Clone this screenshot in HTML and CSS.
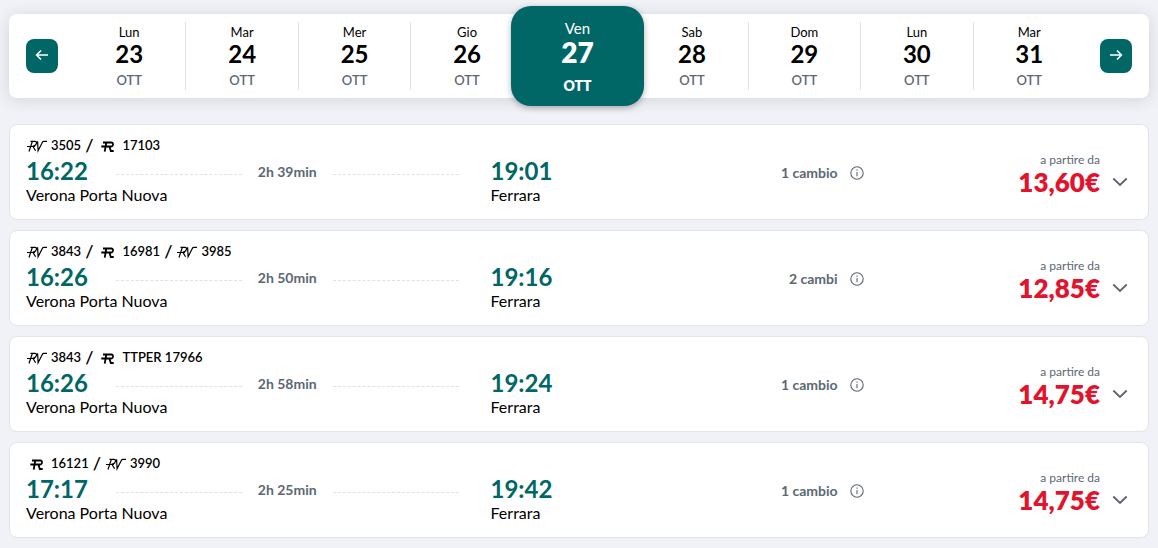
FILE: index.html
```html
<!DOCTYPE html>
<html lang="it">
<head>
  <meta charset="UTF-8">
  <meta name="viewport" content="width=device-width, initial-scale=1">
  <title>Verona Porta Nuova - Ferrara</title>
  <link rel="stylesheet" href="styles.css">
</head>
<body>
  <!-- Icone condivise -->
  <svg class="icon-defs" aria-hidden="true">
    <symbol id="icon-rv" viewBox="0 0 21 20">
      <path d="M1 11.500h8M4.500 6.300h4.500c2.500 0 1.700 4-1 4.600L6.500 11.300M6.300 6.500 3 16.500M7 11.500l2.600 4.300M11.600 6.300l.5 9.500L16.300 7.400q.5-1 1.500-1h3.200" fill="none" stroke="currentColor" stroke-width="1.200"/>
    </symbol>
    <symbol id="icon-r" viewBox="0 0 21 20">
      <path d="M6 7.500h8.200c2.700 0 2.200 4 -.3 4H4.300M9.300 7.500 7.700 16.600M12.400 11.500l1.400 4.500h2.900" fill="none" stroke="currentColor" stroke-width="1.800"/>
    </symbol>
    <symbol id="icon-info" viewBox="0 0 14 14">
      <circle cx="7" cy="7" r="6.2" fill="none" stroke="currentColor" stroke-width="1.1"/>
      <path d="M7 6v4.2M7 3.6v1.2" fill="none" stroke="currentColor" stroke-width="1.1"/>
    </symbol>
    <symbol id="icon-chevron" viewBox="0 0 16 10">
      <path d="M1.3 1.5 8 8l6.700-6.500" fill="none" stroke="currentColor" stroke-width="1.9"/>
    </symbol>
    <symbol id="icon-left" viewBox="0 0 14 12">
      <path d="M13 5H1.800M6 .5 1.500 5 6 9.500" fill="none" stroke="currentColor" stroke-width="1.500"/>
    </symbol>
    <symbol id="icon-right" viewBox="0 0 14 12">
      <path d="M1 5h11.200M8 .5 12.500 5 8 9.500" fill="none" stroke="currentColor" stroke-width="1.500"/>
    </symbol>
  </svg>

  <nav class="date-bar" aria-label="Scegli la data">
    <button class="arrow-button" aria-label="Giorni precedenti"><svg><use href="#icon-left"/></svg></button>
    <div class="days">
      <button class="day"><span class="weekday">Lun</span><span class="number">23</span><span class="month">OTT</span></button>
      <button class="day"><span class="weekday">Mar</span><span class="number">24</span><span class="month">OTT</span></button>
      <button class="day"><span class="weekday">Mer</span><span class="number">25</span><span class="month">OTT</span></button>
      <button class="day"><span class="weekday">Gio</span><span class="number">26</span><span class="month">OTT</span></button>
      <button class="day selected" aria-current="date"><span class="weekday">Ven</span><span class="number">27</span><span class="month">OTT</span></button>
      <button class="day"><span class="weekday">Sab</span><span class="number">28</span><span class="month">OTT</span></button>
      <button class="day"><span class="weekday">Dom</span><span class="number">29</span><span class="month">OTT</span></button>
      <button class="day"><span class="weekday">Lun</span><span class="number">30</span><span class="month">OTT</span></button>
      <button class="day"><span class="weekday">Mar</span><span class="number">31</span><span class="month">OTT</span></button>
    </div>
    <button class="arrow-button" aria-label="Giorni successivi"><svg><use href="#icon-right"/></svg></button>
  </nav>

  <main class="solutions">
    <article class="card">
      <div class="trains">
        <svg><use href="#icon-rv"/></svg><span>3505</span>
        <span class="slash">/</span>
        <svg><use href="#icon-r"/></svg><span>17103</span>
      </div>
      <div class="departure">
        <div class="route">
          <span class="time">16:22</span>
          <span class="line"></span><span class="duration">2h 39min</span><span class="line"></span>
        </div>
        <div class="station">Verona Porta Nuova</div>
      </div>
      <div class="arrival">
        <div class="time">19:01</div>
        <div class="station">Ferrara</div>
      </div>
      <div class="changes">1 cambio <button class="info-button" aria-label="Dettagli cambi"><svg><use href="#icon-info"/></svg></button></div>
      <div class="offer">
        <div class="price-box"><div class="from">a partire da</div><div class="price">13,60€</div></div>
        <button class="expand-button" aria-label="Mostra offerte"><svg><use href="#icon-chevron"/></svg></button>
      </div>
    </article>

    <article class="card">
      <div class="trains">
        <svg><use href="#icon-rv"/></svg><span>3843</span>
        <span class="slash">/</span>
        <svg><use href="#icon-r"/></svg><span>16981</span>
        <span class="slash">/</span>
        <svg><use href="#icon-rv"/></svg><span>3985</span>
      </div>
      <div class="departure">
        <div class="route">
          <span class="time">16:26</span>
          <span class="line"></span><span class="duration">2h 50min</span><span class="line"></span>
        </div>
        <div class="station">Verona Porta Nuova</div>
      </div>
      <div class="arrival">
        <div class="time">19:16</div>
        <div class="station">Ferrara</div>
      </div>
      <div class="changes">2 cambi <button class="info-button" aria-label="Dettagli cambi"><svg><use href="#icon-info"/></svg></button></div>
      <div class="offer">
        <div class="price-box"><div class="from">a partire da</div><div class="price">12,85€</div></div>
        <button class="expand-button" aria-label="Mostra offerte"><svg><use href="#icon-chevron"/></svg></button>
      </div>
    </article>

    <article class="card">
      <div class="trains">
        <svg><use href="#icon-rv"/></svg><span>3843</span>
        <span class="slash">/</span>
        <svg><use href="#icon-r"/></svg><span>TTPER 17966</span>
      </div>
      <div class="departure">
        <div class="route">
          <span class="time">16:26</span>
          <span class="line"></span><span class="duration">2h 58min</span><span class="line"></span>
        </div>
        <div class="station">Verona Porta Nuova</div>
      </div>
      <div class="arrival">
        <div class="time">19:24</div>
        <div class="station">Ferrara</div>
      </div>
      <div class="changes">1 cambio <button class="info-button" aria-label="Dettagli cambi"><svg><use href="#icon-info"/></svg></button></div>
      <div class="offer">
        <div class="price-box"><div class="from">a partire da</div><div class="price">14,75€</div></div>
        <button class="expand-button" aria-label="Mostra offerte"><svg><use href="#icon-chevron"/></svg></button>
      </div>
    </article>

    <article class="card">
      <div class="trains">
        <svg><use href="#icon-r"/></svg><span>16121</span>
        <span class="slash">/</span>
        <svg><use href="#icon-rv"/></svg><span>3990</span>
      </div>
      <div class="departure">
        <div class="route">
          <span class="time">17:17</span>
          <span class="line"></span><span class="duration">2h 25min</span><span class="line"></span>
        </div>
        <div class="station">Verona Porta Nuova</div>
      </div>
      <div class="arrival">
        <div class="time">19:42</div>
        <div class="station">Ferrara</div>
      </div>
      <div class="changes">1 cambio <button class="info-button" aria-label="Dettagli cambi"><svg><use href="#icon-info"/></svg></button></div>
      <div class="offer">
        <div class="price-box"><div class="from">a partire da</div><div class="price">14,75€</div></div>
        <button class="expand-button" aria-label="Mostra offerte"><svg><use href="#icon-chevron"/></svg></button>
      </div>
    </article>
  </main>
</body>
</html>
```
FILE: styles.css
```css
* {
  box-sizing: border-box;
}
body {
  margin: 0;
  padding: 14px 9px 8px;
  background-color: #f1f2f7;
  color: #000;
  font-family: Lato, "Liberation Sans", sans-serif;
  font-size: 16px;
}
button {
  padding: 0;
  border: none;
  background: none;
  color: inherit;
  font-family: inherit;
  cursor: pointer;
}
.icon-defs {
  display: none;
}

/* Barra delle date */
.date-bar {
  display: flex;
  align-items: center;
  gap: 15px;
  padding: 8px 17px;
  background-color: #fff;
  border-radius: 8px;
  box-shadow: 0 2px 16px rgba(40, 40, 70, 0.14);
}
.arrow-button {
  display: flex;
  align-items: center;
  justify-content: center;
  width: 32px;
  height: 34px;
  border-radius: 8px;
  background-color: #006666;
  color: #fff;
}
.arrow-button svg {
  width: 14px;
  height: 12px;
}
.days {
  flex: 1;
  display: grid;
  grid-template-columns: repeat(9, 1fr);
}
.day {
  display: flex;
  flex-direction: column;
  align-items: center;
  border-left: 1px solid #dfe1ea;
}
.day:first-child {
  border-left: none;
}
.weekday {
  font-size: 13px;
  line-height: 20px;
}
.number {
  font-size: 24px;
  font-weight: 700;
  line-height: 24px;
}
.month {
  margin-top: 4px;
  color: #5c6773;
  font-size: 13px;
  font-weight: 600;
  line-height: 20px;
}
.day.selected {
  z-index: 1;
  margin: -16px -9px -16px -12px;
  padding: 12px 0 10px;
  border: none;
  border-radius: 20px;
  background-color: #006666;
  color: #fff;
  box-shadow: 0 2px 6px rgba(0, 0, 0, 0.3);
}
.selected .weekday {
  font-size: 15px;
}
.selected .number {
  font-size: 28px;
  font-weight: 800;
  line-height: 28px;
}
.selected .month {
  color: #fff;
  margin-top: 10px;
  font-size: 14px;
  font-weight: 800;
}

/* Soluzioni di viaggio */
.solutions {
  display: flex;
  flex-direction: column;
  gap: 10px;
  margin-top: 26px;
}
.card {
  display: grid;
  grid-template-columns: 42fr 34fr 24fr;
  grid-template-areas:
    "trains trains offer"
    "departure arrival offer";
  row-gap: 2px;
  padding: 10px 16px 14px;
  border: 1px solid #e1e4ec;
  border-radius: 8px;
  background-color: #fff;
}
.trains {
  grid-area: trains;
  display: flex;
  align-items: center;
  gap: 4px;
  height: 20px;
  font-size: 13px;
  font-weight: 600;
}
.trains svg {
  width: 21px;
  height: 20px;
}
.slash {
  font-size: 18px;
}
.departure {
  grid-area: departure;
}
.route {
  display: flex;
  align-items: center;
  gap: 16px;
  padding-right: 32px;
}
.route .time {
  margin-right: 12px;
}
.time {
  color: #006666;
  font-size: 24px;
  font-weight: 700;
  line-height: 28px;
}
.line {
  flex: 1;
  margin-top: 6px;
  border-top: 1px dashed #dfe1e6;
}
.duration,
.changes {
  color: #5c6773;
  font-size: 14px;
  font-weight: 700;
}
.station {
  line-height: 20px;
}
.arrival,
.changes {
  grid-row: 2;
  grid-column: 2;
}
.changes {
  display: flex;
  align-items: center;
  align-self: start;
  justify-self: end;
  gap: 12px;
  padding-right: 3px;
  line-height: 32px;
}
.info-button {
  display: flex;
}
.info-button svg {
  width: 14px;
  height: 14px;
}
.offer {
  grid-area: offer;
  display: flex;
  align-items: flex-end;
  justify-content: flex-end;
  gap: 12px;
  padding: 0 4px 9px 0;
}
.price-box {
  text-align: right;
}
.from {
  color: #5c6773;
  font-size: 12px;
  line-height: 16px;
}
.price {
  color: #e2142d;
  font-size: 26px;
  font-weight: 800;
  line-height: 28px;
}
.expand-button {
  display: flex;
  align-items: center;
  height: 28px;
  color: #5c6773;
}
.expand-button svg {
  width: 16px;
  height: 10px;
}
```
